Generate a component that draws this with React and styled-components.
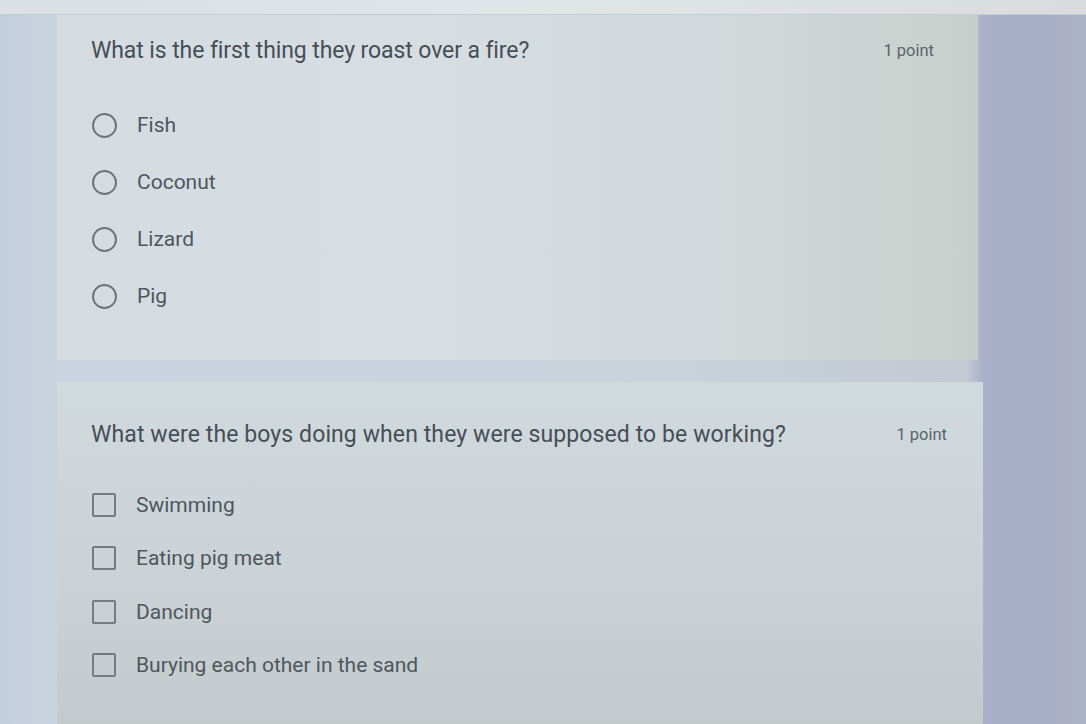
import React from "react";
import styled, { createGlobalStyle } from "styled-components";

const GlobalStyle = createGlobalStyle`
  html, body {
    margin: 0;
    padding: 0;
    width: 1086px;
    height: 724px;
    overflow: hidden;
  }
  body {
    font-family: Roboto, "Liberation Sans", Arial, sans-serif;
  }
`;

const Page = styled.div`
  width: 1086px;
  height: 724px;
  overflow: hidden;
  background: linear-gradient(90deg, #c3cede 0%, #cad4e0 5%, #c9d2db 60%, #c3cad3 89%, #aab0c9 90.5%, #a9aec8 96%, #acb2c6 100%);
  display: flex;
  flex-direction: column;
`;

const TopStrip = styled.div`
  height: 14px;
  flex-shrink: 0;
  background: linear-gradient(90deg, #d9e0e6 0%, #e0e5e8 50%, #d8dcdf 100%);
  border-bottom: 1px solid #c4ccd3;
`;

const Column = styled.div`
  display: flex;
  flex-direction: column;
  gap: 22px;
  padding-left: 57px;
`;

const Card = styled.div`
  width: ${p => p.$w}px;
  height: ${p => p.$h}px;
  box-sizing: border-box;
  padding: ${p => p.$pt}px 44px 0 34px;
  background: ${p => p.$bg};
  display: flex;
  flex-direction: column;
`;

const Header = styled.div`
  display: flex;
  justify-content: space-between;
  align-items: center;
  color: #4a5159;
`;

const Question = styled.div`
  font-size: 23px;
  line-height: 27px;
  letter-spacing: ${p => p.$ls}px;
  color: #474e56;
`;

const Points = styled.div`
  font-size: 16.5px;
  color: #5d636a;
  margin-right: ${p => p.$mr}px;
`;

const Options = styled.div`
  display: flex;
  flex-direction: column;
  gap: ${p => p.$gap}px;
  margin-top: ${p => p.$mt}px;
`;

const Option = styled.label`
  display: flex;
  align-items: center;
  gap: 20px;
  height: 26px;
  font-size: 21px;
  color: #4f565d;
`;

const Radio = styled.span`
  width: 21px;
  height: 21px;
  margin-left: 1px;
  border: 2px solid #6e7479;
  border-radius: 50%;
  flex-shrink: 0;
`;

const Check = styled.span`
  width: 20px;
  height: 20px;
  margin-left: 1px;
  border: 2px solid #757b81;
  border-radius: 2px;
  flex-shrink: 0;
`;

const radioOptions = ["Fish", "Coconut", "Lizard", "Pig"];
const checkOptions = ["Swimming", "Eating pig meat", "Dancing", "Burying each other in the sand"];

export default function App() {
  return (
    <Page>
      <GlobalStyle />
      <TopStrip />
      <Column>
        <Card
          $w={921}
          $h={345}
          $pt={22}
          $bg="linear-gradient(90deg, #d4dce2 0%, #d6dee2 40%, #d0d8da 75%, #c8cfcb 100%)"
        >
          <Header>
            <Question $ls={-0.1}>What is the first thing they roast over a fire?</Question>
            <Points $mr={0}>1 point</Points>
          </Header>
          <Options $gap={31} $mt={48}>
            {radioOptions.map(o => (
              <Option key={o}>
                <Radio />
                {o}
              </Option>
            ))}
          </Options>
        </Card>
        <Card
          $w={926}
          $h={360}
          $pt={39}
          $bg="linear-gradient(180deg, #d0d9de 0%, #cbd3d7 50%, #c2c9cb 100%)"
        >
          <Header>
            <Question $ls={0.1}>What were the boys doing when they were supposed to be working?</Question>
            <Points $mr={-8}>1 point</Points>
          </Header>
          <Options $gap={27.3} $mt={44}>
            {checkOptions.map(o => (
              <Option key={o}>
                <Check />
                {o}
              </Option>
            ))}
          </Options>
        </Card>
      </Column>
    </Page>
  );
}
